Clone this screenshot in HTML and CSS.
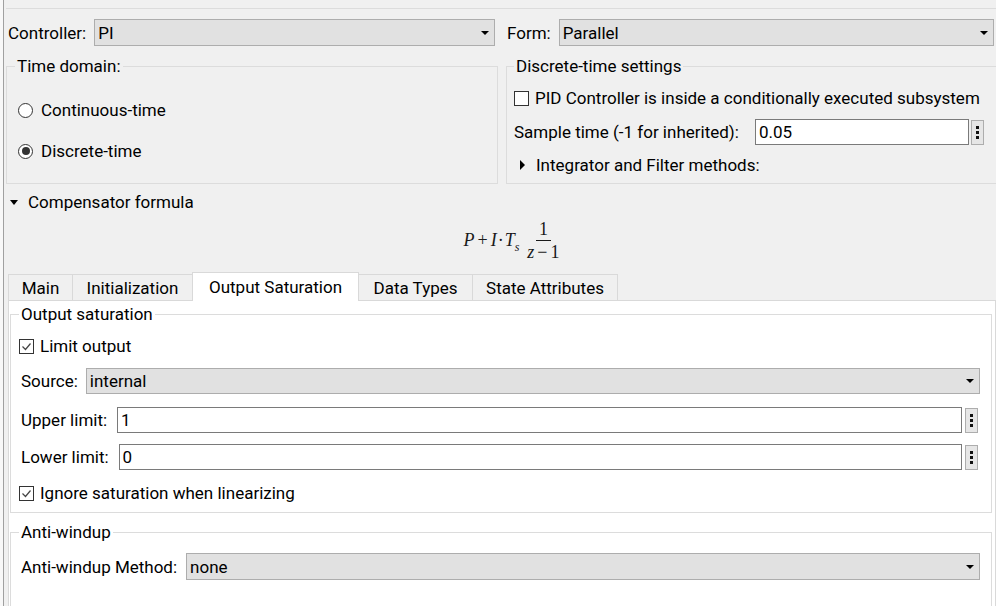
FILE: index.html
```html
<!DOCTYPE html>
<html>
<head>
<meta charset="utf-8">
<link rel="stylesheet" href="styles.css">
</head>
<body>
<div class="window">
  <div class="edge"></div>
  <div class="content">
    <div class="top-strip"></div>

    <div class="row-top">
      <div class="field">
        <span class="lbl">Controller:</span>
        <div class="select"><span class="val">PI</span><span class="caret"></span></div>
      </div>
      <div class="field">
        <span class="lbl">Form:</span>
        <div class="select"><span class="val">Parallel</span><span class="caret"></span></div>
      </div>
    </div>

    <div class="row-groups">
      <fieldset class="group time">
        <legend>Time domain:</legend>
        <div class="opts">
          <label class="opt"><span class="radio"></span>Continuous-time</label>
          <label class="opt"><span class="radio on"></span>Discrete-time</label>
        </div>
      </fieldset>
      <fieldset class="group dts">
        <legend>Discrete-time settings</legend>
        <div class="chk-row"><span class="check"></span><span>PID Controller is inside a conditionally executed subsystem</span></div>
        <div class="sample-row">
          <span class="lbl">Sample time (-1 for inherited):</span>
          <div class="input sample">0.05</div>
          <div class="dots"><i></i><i></i><i></i></div>
        </div>
        <div class="int-row"><span class="tri-right"></span><span>Integrator and Filter methods:</span></div>
      </fieldset>
    </div>

    <div class="comp-row"><span class="tri-down"></span><span>Compensator formula</span></div>

    <div class="formula">
      <span class="mi">P</span><span class="mo">+</span><span class="mi">I</span><span class="dot">·</span><span class="mi">T</span><span class="sub">s</span>
      <span class="frac"><span class="num">1</span><span class="den"><span class="mi">z</span><span class="mo2">−</span>1</span></span>
    </div>

    <div class="tabs">
      <div class="tab t-main">Main</div>
      <div class="tab t-init">Initialization</div>
      <div class="tab t-out active">Output Saturation</div>
      <div class="tab t-data">Data Types</div>
      <div class="tab t-state">State Attributes</div>
    </div>

    <div class="panel">
      <fieldset class="group outsat">
        <legend>Output saturation</legend>
        <div class="row row-limit"><span class="check on"><svg width="13" height="13" viewBox="0 0 13 13"><polyline points="2.5,6.5 5.5,9.5 10.5,3.5" fill="none" stroke="#444" stroke-width="1.2"/></svg></span><span>Limit output</span></div>
        <div class="row row-source">
          <span class="lbl">Source:</span>
          <div class="select"><span class="val">internal</span><span class="caret"></span></div>
        </div>
        <div class="row row-upper">
          <span class="lbl">Upper limit:</span>
          <div class="input grow">1</div>
          <div class="dots"><i></i><i></i><i></i></div>
        </div>
        <div class="row row-lower">
          <span class="lbl">Lower limit:</span>
          <div class="input grow">0</div>
          <div class="dots"><i></i><i></i><i></i></div>
        </div>
        <div class="row row-ignore"><span class="check on"><svg width="13" height="13" viewBox="0 0 13 13"><polyline points="2.5,6.5 5.5,9.5 10.5,3.5" fill="none" stroke="#444" stroke-width="1.2"/></svg></span><span>Ignore saturation when linearizing</span></div>
      </fieldset>

      <fieldset class="group antiwindup">
        <legend>Anti-windup</legend>
        <div class="row row-method">
          <span class="lbl">Anti-windup Method:</span>
          <div class="select"><span class="val">none</span><span class="caret"></span></div>
        </div>
      </fieldset>
    </div>
  </div>
</div>
</body>
</html>
```

FILE: styles.css
```css
* { box-sizing: border-box; }
html, body { margin: 0; padding: 0; }
body {
  background: #f0f0f0;
  font-family: Roboto, "Liberation Sans", sans-serif;
  font-size: 17px;
  color: #000;
  width: 996px;
  height: 606px;
  overflow: hidden;
}
.window { display: flex; height: 606px; }
.edge { width: 4px; flex: none; background: #f8f8f8; border-right: 1px solid #a0a0a0; }
.content { flex: 1; min-width: 0; overflow: hidden; }

.top-strip { height: 9px; margin-left: 2px; border-bottom: 1px solid #dcdcdc; }

.row-top {
  display: grid;
  grid-template-columns: 487px 1fr;
  column-gap: 12px;
  margin-top: 10px;
  padding: 0 2px 0 4px;
}
.field { display: flex; align-items: center; gap: 8px; }
.lbl { white-space: nowrap; }

.select {
  flex: 1;
  height: 27px;
  background: #e1e1e1;
  border: 1px solid #adadad;
  display: flex;
  align-items: center;
  padding: 0 5px 0 3px;
}
.select .val { flex: 1; }
.caret {
  width: 0; height: 0;
  border-left: 4px solid transparent;
  border-right: 4px solid transparent;
  border-top: 4px solid #000;
}

.row-groups {
  display: grid;
  grid-template-columns: 492px 1fr;
  column-gap: 8px;
  margin: 10px -10px 0 2px;
}
.group {
  margin: 0;
  min-width: 0;
  border: 1px solid #dcdcdc;
  padding: 0 11px;
}
.group > legend {
  padding: 0 2px;
  line-height: 20px;
  height: 20px;
}
.time > legend { margin-left: -3px; }
.time { height: 128px; }
.opts { display: flex; flex-direction: column; gap: 15px; padding-top: 21px; }
.opt { height: 26px; display: flex; align-items: center; gap: 8px; }
.radio {
  width: 15px; height: 15px;
  border: 1px solid #333;
  border-radius: 50%;
  background: #fff;
  display: flex; align-items: center; justify-content: center;
}
.radio.on::after {
  content: "";
  width: 8px; height: 8px;
  border-radius: 50%;
  background: #333;
}

.dts { padding: 0 7px; }
.dts > legend { margin-left: 0; }
.chk-row { height: 20px; margin-top: 12px; display: flex; align-items: center; gap: 6px; }
.check {
  width: 15px; height: 15px;
  border: 1px solid #333;
  background: #fff;
  display: flex; align-items: center; justify-content: center;
  flex: none;
}
.check svg { display: block; }
.sample-row { height: 26px; margin-top: 11px; display: flex; align-items: center; }
.input {
  height: 26px;
  border: 1px solid #7a7a7a;
  background: #fff;
  display: flex; align-items: center;
  padding-left: 3px;
}
.input.sample { width: 214px; margin-left: 16px; }
.dots {
  width: 13px; height: 25px;
  flex: none;
  margin-left: 2px;
  border: 1px solid #adadad;
  background: #e6e6e6;
  display: flex; flex-direction: column; align-items: center; justify-content: center;
  gap: 2px;
}
.dots i { display: block; width: 3px; height: 3px; background: #111; }
.int-row { height: 20px; margin-top: 10px; display: flex; align-items: center; gap: 11px; padding-left: 6px; }
.tri-right {
  width: 0; height: 0;
  border-top: 5px solid transparent;
  border-bottom: 5px solid transparent;
  border-left: 5px solid #000;
}

.comp-row { height: 20px; margin-top: 8px; padding-left: 6px; display: flex; align-items: center; gap: 10px; }
.tri-down {
  width: 0; height: 0;
  border-left: 4.5px solid transparent;
  border-right: 4.5px solid transparent;
  border-top: 5px solid #000;
}

.formula {
  height: 60px;
  display: flex;
  justify-content: center;
  align-items: center;
  padding-left: 24px;
  padding-bottom: 4px;
  font-family: "Liberation Serif", "DejaVu Serif", serif;
  font-size: 18px;
  color: #1a1a1a;
}
.formula .mi { font-style: italic; }
.formula .mo { margin: 0 3px; }
.formula .dot { margin: 0 1px; }
.formula .sub { font-style: italic; font-size: 12px; align-self: center; margin-top: 14px; }
.frac {
  display: inline-flex;
  flex-direction: column;
  align-items: center;
  margin-left: 7px;
  margin-top: 0;
}
.frac .num { line-height: 16px; padding: 0 3px 3px; border-bottom: 1px solid #1a1a1a; }
.frac .den { line-height: 16px; padding: 3px 1px 0; }
.frac .mo2 { margin: 0 3px; }

.tabs {
  display: flex;
  align-items: flex-end;
  height: 28px;
  padding-left: 4px;
}
.tab {
  height: 26px;
  padding: 0;
  border: 1px solid #d9d9d9;
  border-bottom: none;
  margin-right: -1px;
  background: #f0f0f0;
  display: flex; align-items: center; justify-content: center;
  white-space: nowrap;
}
.t-main { width: 65px; }
.t-init { width: 121px; }
.t-out { width: 167px; }
.t-data { width: 115px; }
.t-state { width: 146px; }
.tab.active {
  height: 29px;
  margin-bottom: -1px;
  padding-bottom: 1px;
  background: #fff;
  position: relative;
  z-index: 1;
}

.panel {
  margin-left: 4px;
  height: 320px;
  background: #fff;
  border: 1px solid #d9d9d9;
  padding: 3px 3px 0 1px;
}
.outsat, .antiwindup { padding: 0 11px 0 10px; }
.outsat > legend, .antiwindup > legend { margin-left: -2px; }
.row { display: flex; align-items: center; gap: 9px; }
.row-limit { height: 20px; margin-top: 12px; gap: 6px; margin-left: -2px; }
.row-source { height: 26px; margin-top: 12px; gap: 8px; }
.row-source .select { height: 26px; }
.row-upper { height: 26px; margin-top: 13px; gap: 10px; }
.row-lower { height: 26px; margin-top: 11px; gap: 10px; }
.row-upper .dots, .row-lower .dots { margin-left: -7px; margin-right: 2px; }
.input.grow { flex: 1; }
.row-ignore { height: 20px; margin-top: 13px; gap: 6px; margin-left: -2px; }
.outsat { padding-bottom: 9px; }
.antiwindup { margin-top: 9px; height: 120px; }
.row-method { height: 27px; margin-top: 11px; }
```
